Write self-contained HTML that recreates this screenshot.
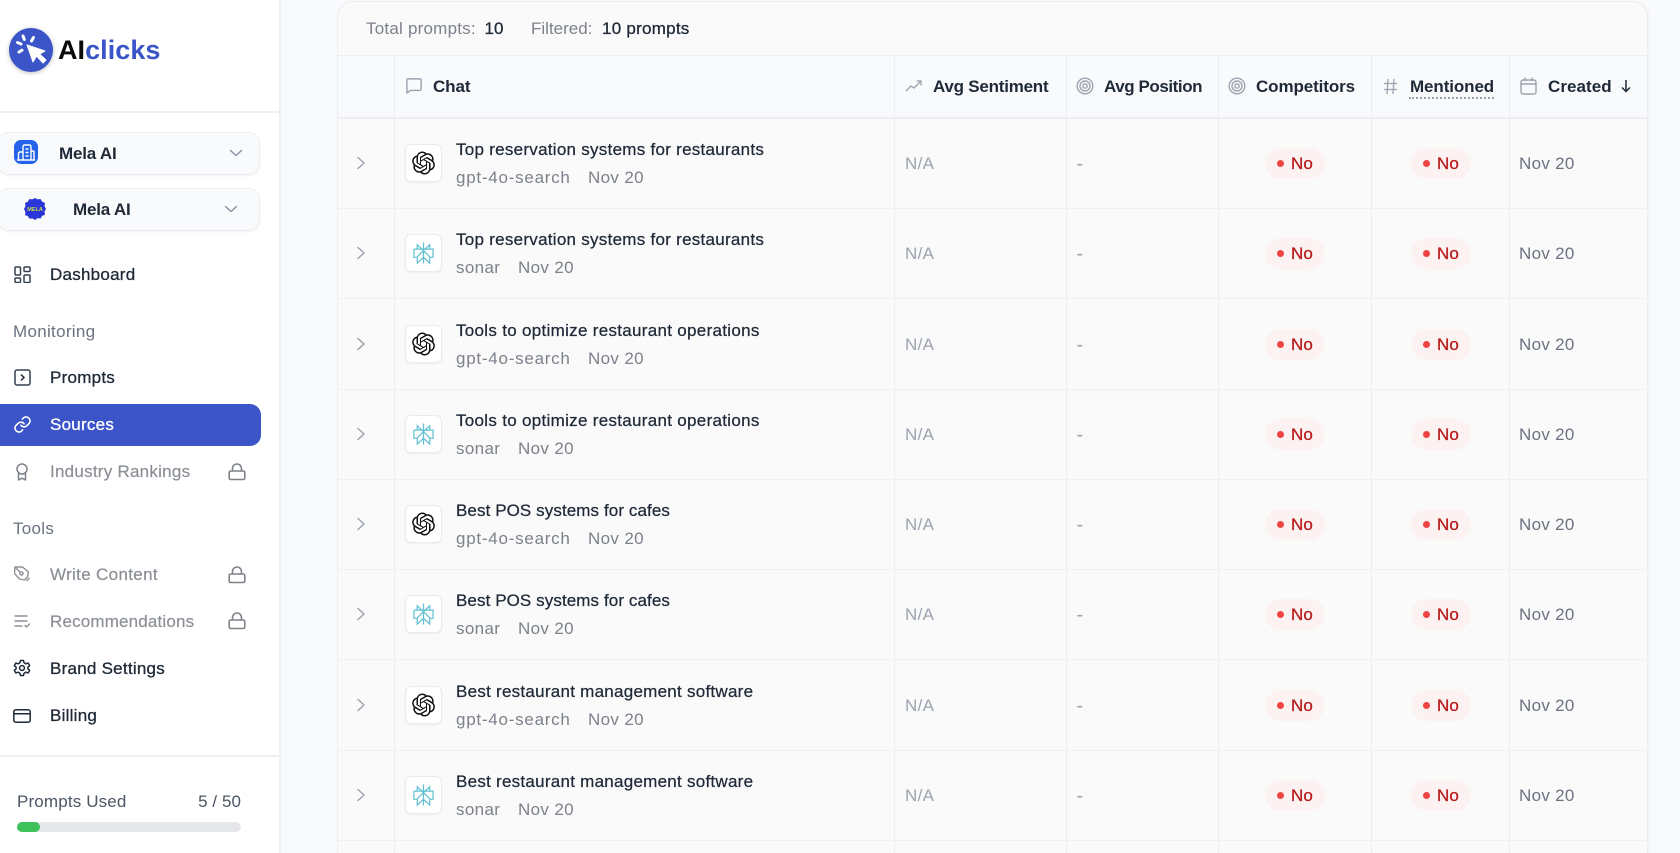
<!DOCTYPE html>
<html><head><meta charset="utf-8"><style>
html,body{margin:0;padding:0;width:1680px;height:853px;overflow:hidden;background:#fff}
body{font-family:"Liberation Sans",sans-serif;position:relative;filter:blur(.35px)}
.a,.t{position:absolute}
.t{white-space:nowrap;line-height:20px;transform:translateY(-9px)}
.n{font-size:17px;letter-spacing:.25px;color:#1f2937;-webkit-text-stroke:.3px #1f2937;left:50px}
.g{color:#8b8f96;-webkit-text-stroke:.2px #8b8f96}
.sec{font-size:17px;letter-spacing:.3px;color:#6b7280;left:13px}
.dd{position:absolute;left:-2px;width:260px;height:41px;background:#f9fafb;border:1px solid #eceef2;border-radius:11px;box-shadow:0 1px 2px rgba(0,0,0,.05)}
.th{font-size:17px;font-weight:700;color:#1f2937;top:86px}
.ln{position:absolute;background:#eceef1}
.row{position:absolute;left:338px;width:1310px;height:90px;border-bottom:1px solid #f0f1f4}
.c{left:17px;top:45px;width:12px;height:14px;transform:translateY(-7px)}
.logo{position:absolute;left:67px;top:26px;width:35px;height:36px;background:#fff;border:1px solid #e9ebef;border-radius:6px;box-shadow:0 1px 2px rgba(0,0,0,.05)}
.logo svg{position:absolute;left:6px;top:6px;width:23px;height:24px}
.ti{left:118px;top:31px;font-size:17px;letter-spacing:.27px;color:#1f2937;-webkit-text-stroke:.25px #1f2937}
.ti2{letter-spacing:.3px}.ti3{letter-spacing:.09px}.ti4{letter-spacing:.26px}
.su{top:59px;font-size:17px;letter-spacing:.35px;color:#7c818a}
.gp{letter-spacing:.75px}
.na{left:567px;top:45px;font-size:17px;letter-spacing:.3px;color:#9ca3af}
.da{left:738.500px;top:45px;font-size:20px;color:#9ca3af}
.cr{left:1181px;top:45px;font-size:17px;letter-spacing:.3px;color:#6b7280}
.p{position:absolute;top:30px;width:60px;height:31px;border-radius:16px;background:#fdf2f2}
.p i{position:absolute;left:12px;top:12px;width:7px;height:7px;border-radius:50%;background:#ef4444}
.p b{position:absolute;left:26px;top:6px;font-size:17px;line-height:20px;font-weight:400;color:#b91c1c;-webkit-text-stroke:.3px #b91c1c;letter-spacing:.1px}
</style></head><body>
<svg width="0" height="0" style="position:absolute"><defs>
<symbol id="oa" viewBox="0 0 24 24"><path fill="#111" d="M22.2819 9.8211a5.9847 5.9847 0 0 0-.5157-4.9108 6.0462 6.0462 0 0 0-6.5098-2.9A6.0651 6.0651 0 0 0 4.9807 4.1818a5.9847 5.9847 0 0 0-3.9977 2.9 6.0462 6.0462 0 0 0 .7427 7.0966 5.98 5.98 0 0 0 .511 4.9107 6.051 6.051 0 0 0 6.5146 2.9001A5.9847 5.9847 0 0 0 13.2599 24a6.0557 6.0557 0 0 0 5.7718-4.2058 5.9894 5.9894 0 0 0 3.9977-2.9001 6.0557 6.0557 0 0 0-.7475-7.0729zm-9.022 12.6081a4.4755 4.4755 0 0 1-2.8764-1.0408l.1419-.0804 4.7783-2.7582a.7948.7948 0 0 0 .3927-.6813v-6.7369l2.02 1.1686a.071.071 0 0 1 .038.052v5.5826a4.504 4.504 0 0 1-4.4945 4.4944zm-9.6607-4.1254a4.4708 4.4708 0 0 1-.5346-3.0137l.142.0852 4.783 2.7582a.7712.7712 0 0 0 .7806 0l5.8428-3.3685v2.3324a.0804.0804 0 0 1-.0332.0615L9.74 19.9502a4.4992 4.4992 0 0 1-6.1408-1.6464zM2.3408 7.8956a4.485 4.485 0 0 1 2.3655-1.9728V11.6a.7664.7664 0 0 0 .3879.6765l5.8144 3.3543-2.0201 1.1685a.0757.0757 0 0 1-.071 0l-4.8303-2.7865A4.504 4.504 0 0 1 2.3408 7.872zm16.5963 3.8558L13.1038 8.364 15.1192 7.2a.0757.0757 0 0 1 .071 0l4.8303 2.7913a4.4944 4.4944 0 0 1-.6765 8.1042v-5.6772a.79.79 0 0 0-.407-.667zm2.0107-3.0231l-.142-.0852-4.7735-2.7818a.7759.7759 0 0 0-.7854 0L9.409 9.2297V6.8974a.0662.0662 0 0 1 .0284-.0615l4.8303-2.7866a4.4992 4.4992 0 0 1 6.6802 4.66zM8.3065 12.863l-2.02-1.1638a.0804.0804 0 0 1-.038-.0567V6.0742a4.4992 4.4992 0 0 1 7.3757-3.4537l-.142.0805L8.704 5.459a.7948.7948 0 0 0-.3927.6813zm1.0976-2.3654l2.602-1.4998 2.6069 1.4998v2.9994l-2.5974 1.4997-2.6067-1.4997Z"/></symbol>
<symbol id="px" viewBox="0 0 24 24"><path fill="none" stroke="#62c0d2" stroke-width="1.300" d="M12 1v22M12 9.500 5.500 3.500V8M12 9.500l6.500-6V8M2 8h20v8.500h-3.500M2 8v8.500h3.500M12 9.500l-6.500 6.500v6.500L12 16.500M12 9.500l6.500 6.500v6.500L12 16.500"/></symbol>
<symbol id="ch" viewBox="0 0 12 14"><path fill="none" stroke="#9ca3af" stroke-width="1.500" stroke-linecap="round" stroke-linejoin="round" d="M3 1.500 9 7l-6 5.500"/></symbol>
<symbol id="lk" viewBox="0 0 18 18"><path fill="none" stroke="#7d8288" stroke-width="1.600" d="M1.200 9.500A1.500 1.500 0 0 1 2.700 8h12.600a1.500 1.500 0 0 1 1.500 1.500v5.500a1.500 1.500 0 0 1-1.500 1.500H2.700a1.500 1.500 0 0 1-1.500-1.500zM4.500 8V5.500a4.500 4.500 0 0 1 9 0V8"/></symbol>
<symbol id="tg" viewBox="0 0 18 18"><g fill="none" stroke="#9ca3af" stroke-width="1.400"><circle cx="9" cy="9" r="7.800"/><circle cx="9" cy="9" r="5"/><circle cx="9" cy="9" r="2.200"/></g></symbol>
<symbol id="dn" viewBox="0 0 14 8"><path fill="none" stroke="#8a94a6" stroke-width="1.500" stroke-linecap="round" stroke-linejoin="round" d="M1.500 1.500 7 6.500l5.500-5"/></symbol>
</defs></svg>

<!-- main background -->
<div class="a" style="left:281px;top:0;width:1399px;height:853px;background:#f9fafc"></div>
<div class="a" style="left:337px;top:1px;width:1311px;height:860px;background:#fafafb;border:1px solid #eceef1;border-radius:16px 16px 0 0;box-sizing:border-box;box-shadow:2px 0 3px rgba(0,0,0,.03)"></div>

<!-- sidebar -->
<div class="a" style="left:0;top:0;width:279px;height:853px;background:#fff;border-right:2px solid #eef0f4"></div>
<div class="ln" style="left:0;top:111px;width:279px;height:2px;background:#eeeff2"></div>
<div class="ln" style="left:0;top:755px;width:279px;height:2px;background:#eeeff2"></div>

<svg class="a" style="left:7px;top:26px;filter:drop-shadow(0 1px 2px rgba(0,0,0,.25))" width="48" height="50" viewBox="0 0 48 50"><circle cx="24" cy="24" r="22" fill="#3b54c8"/><path fill="#fff" stroke="#fff" stroke-width="1" stroke-linejoin="round" d="M20 19 26 36 29.500 30 36 37 39 34 32.500 28 38 25Z"/><path stroke="#fff" stroke-width="3" stroke-linecap="round" fill="none" d="M16 10l1.300 3.500M26.500 11.500l-2 3.500M10.500 16.500l3.500 1.500M12 26l3-1.800"/></svg>
<div class="t" style="left:58px;top:49px;font-size:27px;font-weight:700;letter-spacing:.05px;color:#0a0a0a">AI<span style="color:#3b54c8">clicks</span></div>

<div class="dd" style="top:132px"></div>
<svg class="a" style="left:14px;top:140px" width="24" height="24" viewBox="0 0 24 24"><rect width="24" height="24" rx="7" fill="#2563eb"/><path fill="none" stroke="#fff" stroke-width="1.400" d="M9 20V6.500A1.500 1.500 0 0 1 10.500 5h5A1.500 1.500 0 0 1 17 6.500V20M4.500 20v-6.500A1.500 1.500 0 0 1 6 12h3M17 11h2a1 1 0 0 1 1 1v8M3 20h18M11.500 9h3M11.500 12.500h3M11.500 16h3"/></svg>
<div class="t" style="left:59px;top:153px;font-size:17px;font-weight:700;letter-spacing:-.2px;color:#1f2937">Mela AI</div>
<svg class="a" style="left:229px;top:149px" width="14" height="8"><use href="#dn"/></svg>

<div class="dd" style="top:188px"></div>
<svg class="a" style="left:24px;top:198px" width="22" height="22" viewBox="0 0 22 22"><path fill="#2a36d8" d="M11 0l2.600 1.400L16.500 1l1.500 2.500L21 5l-.5 3L22 11l-1.500 2.600.5 3-3 1.400-1.500 2.500-2.900-.4L11 22l-2.600-1.600-2.900.4L4 18.300 1 17l.5-3L0 11l1.500-3L1 5l3-1.500L5.500 1l2.900.4z"/><text x="11" y="13" text-anchor="middle" font-family="Liberation Sans" font-size="5.500" font-weight="700" fill="#c7dc4a">MELA</text></svg>
<div class="t" style="left:73px;top:209px;font-size:17px;font-weight:700;letter-spacing:-.2px;color:#1f2937">Mela AI</div>
<svg class="a" style="left:224px;top:205px" width="14" height="8"><use href="#dn"/></svg>

<!-- nav icons -->
<svg class="a" style="left:14px;top:266px" width="17" height="17" viewBox="0 0 17 17"><g fill="none" stroke="#374151" stroke-width="1.500"><rect x="1" y="1" width="5.500" height="8" rx="1"/><rect x="10" y="1" width="6" height="4.500" rx="1"/><rect x="1" y="12" width="5.500" height="4.500" rx="1"/><rect x="10" y="9" width="6" height="7.500" rx="1"/></g></svg>
<div class="t n" style="top:274px">Dashboard</div>
<div class="t sec" style="top:331px">Monitoring</div>
<svg class="a" style="left:14px;top:369px" width="17" height="17" viewBox="0 0 17 17"><rect x="1" y="1" width="15" height="15" rx="2" fill="none" stroke="#374151" stroke-width="1.500"/><path d="M7 5.500l3 3-3 3" fill="none" stroke="#1f2937" stroke-width="1.500"/></svg>
<div class="t n" style="top:377px">Prompts</div>

<div class="a" style="left:0;top:404px;width:261px;height:42px;background:#3b54c8;border-radius:0 11px 11px 0"></div>
<svg class="a" style="left:13px;top:415px" width="19" height="19" viewBox="0 0 24 24"><path fill="none" stroke="#fff" stroke-width="2" stroke-linecap="round" stroke-linejoin="round" d="M10 13a5 5 0 0 0 7.500.5l3-3a5 5 0 0 0-7-7l-1.700 1.700M14 11a5 5 0 0 0-7.500-.5l-3 3a5 5 0 0 0 7 7l1.700-1.700"/></svg>
<div class="t n" style="top:424px;color:#fff;-webkit-text-stroke:.3px #fff">Sources</div>

<svg class="a" style="left:15px;top:463px" width="14" height="18" viewBox="0 0 14 18"><g fill="none" stroke="#7d8288" stroke-width="1.500" stroke-linejoin="round"><circle cx="7" cy="6" r="5"/><path d="M3.500 10v7L7 15.200 10.500 17v-7"/></g></svg>
<div class="t n g" style="top:471px;letter-spacing:.25px">Industry Rankings</div>
<svg class="a" style="left:228px;top:463px" width="18" height="18"><use href="#lk"/></svg>
<div class="t sec" style="top:528px">Tools</div>

<svg class="a" style="left:14px;top:566px" width="17" height="17" viewBox="0 0 17 17"><g fill="none" stroke="#8b8f96" stroke-width="1.400" stroke-linejoin="round"><path d="M1 1h7.500l6 5-1 5-3 3-5-1-5-5.500zM1 1l5 5"/><circle cx="7.500" cy="7.500" r="1.600"/><path d="M12.500 15l3-3"/></g></svg>
<div class="t n g" style="top:574px;letter-spacing:.33px">Write Content</div>
<svg class="a" style="left:228px;top:566px" width="18" height="18"><use href="#lk"/></svg>

<svg class="a" style="left:14px;top:614px" width="17" height="15" viewBox="0 0 17 15"><path fill="none" stroke="#8b8f96" stroke-width="1.400" stroke-linecap="round" d="M1 2h12M1 7h12M1 12h7M11 11.500l1.500 1.500 3-3"/></svg>
<div class="t n g" style="top:621px;letter-spacing:.17px">Recommendations</div>
<svg class="a" style="left:228px;top:612px" width="18" height="18"><use href="#lk"/></svg>

<svg class="a" style="left:13px;top:659px" width="18" height="18" viewBox="0 0 24 24"><g fill="none" stroke="#1f2937" stroke-width="2" stroke-linejoin="round"><circle cx="12" cy="12" r="3.200"/><path d="M10 2h4l.7 3 2.500 1.400 3-1 2 3.500-2.300 2v2.200l2.300 2-2 3.500-3-1-2.500 1.400-.7 3h-4l-.7-3-2.500-1.400-3 1-2-3.500 2.300-2v-2.200l-2.300-2 2-3.500 3 1L9.300 5z"/></g></svg>
<div class="t n" style="top:668px;letter-spacing:.25px">Brand Settings</div>
<svg class="a" style="left:13px;top:709px" width="18" height="14" viewBox="0 0 18 14"><g fill="none" stroke="#1f2937" stroke-width="1.500"><rect x=".8" y=".8" width="16.400" height="12.400" rx="2"/><path d="M.8 4.800h16.400"/></g></svg>
<div class="t n" style="top:715px">Billing</div>

<div class="t" style="left:17px;top:801px;font-size:17px;letter-spacing:.15px;color:#4b5563">Prompts Used</div>
<div class="t" style="right:1439px;top:801px;font-size:17px;letter-spacing:.05px;color:#4b5563">5 / 50</div>
<div class="a" style="left:17px;top:822px;width:224px;height:10px;border-radius:5px;background:#e5e7eb"></div>
<div class="a" style="left:17px;top:822px;width:23px;height:10px;border-radius:5px;background:#3fc25b"></div>

<!-- stats -->
<div class="t" style="left:366px;top:28px;font-size:17px;letter-spacing:.22px;color:#7c818a">Total prompts:</div>
<div class="t" style="left:484.500px;top:28px;font-size:17px;letter-spacing:.1px;color:#1f2937;-webkit-text-stroke:.3px #1f2937">10</div>
<div class="t" style="left:531px;top:28px;font-size:17px;letter-spacing:0;color:#7c818a">Filtered:</div>
<div class="t" style="left:602px;top:28px;font-size:17px;letter-spacing:.25px;color:#1f2937;-webkit-text-stroke:.3px #1f2937">10 prompts</div>

<!-- table header -->
<div class="a" style="left:338px;top:55px;width:1309px;height:64px;background:#f9fafc;border-top:1px solid #eceef1;border-bottom:2px solid #eceef1;box-sizing:border-box"></div>
<svg class="a" style="left:406px;top:78px" width="16" height="16" viewBox="0 0 18 18"><path fill="none" stroke="#9ca3af" stroke-width="1.600" stroke-linejoin="round" d="M1 2.500A1.500 1.500 0 0 1 2.500 1h13A1.500 1.500 0 0 1 17 2.500v10a1.500 1.500 0 0 1-1.500 1.500H5l-4 3z"/></svg>
<div class="t th" style="left:433px;letter-spacing:-.1px">Chat</div>
<svg class="a" style="left:905px;top:79px" width="18" height="14" viewBox="0 0 18 14"><path fill="none" stroke="#9ca3af" stroke-width="1.300" d="M1 12l5-5 3 2 7-7M11.500 2H16v4.500"/></svg>
<div class="t th" style="left:933px;letter-spacing:-.23px">Avg Sentiment</div>
<svg class="a" style="left:1076px;top:77px" width="18" height="18"><use href="#tg"/></svg>
<div class="t th" style="left:1104px;letter-spacing:-.43px">Avg Position</div>
<svg class="a" style="left:1228px;top:77px" width="18" height="18"><use href="#tg"/></svg>
<div class="t th" style="left:1256px;letter-spacing:-.1px">Competitors</div>
<svg class="a" style="left:1383px;top:78px" width="15" height="17" viewBox="0 0 15 17"><path fill="none" stroke="#9ca3af" stroke-width="1.300" d="M5 1 4 16M11 1l-1 15M1 5.500h13M1 11.500h13"/></svg>
<div class="t th" style="left:1410px;letter-spacing:-.1px">Mentioned</div>
<div class="a" style="left:1409px;top:97px;width:85px;border-top:2px dotted #9ca3af"></div>
<svg class="a" style="left:1520px;top:77px" width="17" height="18" viewBox="0 0 17 18"><g fill="none" stroke="#9ca3af" stroke-width="1.400"><rect x="1" y="3" width="15" height="14" rx="2"/><path d="M1 7h15M5 .500V4M12 .500V4"/></g></svg>
<div class="t th" style="left:1548px;letter-spacing:.05px">Created</div>
<svg class="a" style="left:1620px;top:79px" width="12" height="14" viewBox="0 0 12 14"><path fill="none" stroke="#1f2937" stroke-width="1.500" d="M6 1v11M2 8.500 6 12.500l4-4"/></svg>

<!-- rows -->
<div class="row" style="top:118px"><svg class="a c" width="12" height="14"><use href="#ch"/></svg><div class="logo"><svg><use href="#oa"/></svg></div><div class="t ti">Top reservation systems for restaurants</div><div class="t su gp" style="left:118px">gpt-4o-search</div><div class="t su" style="left:250px">Nov 20</div><div class="t na">N/A</div><div class="t da">-</div><div class="p" style="left:927px"><i></i><b>No</b></div><div class="p" style="left:1073px"><i></i><b>No</b></div><div class="t cr">Nov 20</div></div>
<div class="row" style="top:208.250px"><svg class="a c" width="12" height="14"><use href="#ch"/></svg><div class="logo"><svg><use href="#px"/></svg></div><div class="t ti">Top reservation systems for restaurants</div><div class="t su" style="left:118px">sonar</div><div class="t su" style="left:180px">Nov 20</div><div class="t na">N/A</div><div class="t da">-</div><div class="p" style="left:927px"><i></i><b>No</b></div><div class="p" style="left:1073px"><i></i><b>No</b></div><div class="t cr">Nov 20</div></div>
<div class="row" style="top:298.500px"><svg class="a c" width="12" height="14"><use href="#ch"/></svg><div class="logo"><svg><use href="#oa"/></svg></div><div class="t ti ti2">Tools to optimize restaurant operations</div><div class="t su gp" style="left:118px">gpt-4o-search</div><div class="t su" style="left:250px">Nov 20</div><div class="t na">N/A</div><div class="t da">-</div><div class="p" style="left:927px"><i></i><b>No</b></div><div class="p" style="left:1073px"><i></i><b>No</b></div><div class="t cr">Nov 20</div></div>
<div class="row" style="top:388.750px"><svg class="a c" width="12" height="14"><use href="#ch"/></svg><div class="logo"><svg><use href="#px"/></svg></div><div class="t ti ti2">Tools to optimize restaurant operations</div><div class="t su" style="left:118px">sonar</div><div class="t su" style="left:180px">Nov 20</div><div class="t na">N/A</div><div class="t da">-</div><div class="p" style="left:927px"><i></i><b>No</b></div><div class="p" style="left:1073px"><i></i><b>No</b></div><div class="t cr">Nov 20</div></div>
<div class="row" style="top:479px"><svg class="a c" width="12" height="14"><use href="#ch"/></svg><div class="logo"><svg><use href="#oa"/></svg></div><div class="t ti ti3">Best POS systems for cafes</div><div class="t su gp" style="left:118px">gpt-4o-search</div><div class="t su" style="left:250px">Nov 20</div><div class="t na">N/A</div><div class="t da">-</div><div class="p" style="left:927px"><i></i><b>No</b></div><div class="p" style="left:1073px"><i></i><b>No</b></div><div class="t cr">Nov 20</div></div>
<div class="row" style="top:569.250px"><svg class="a c" width="12" height="14"><use href="#ch"/></svg><div class="logo"><svg><use href="#px"/></svg></div><div class="t ti ti3">Best POS systems for cafes</div><div class="t su" style="left:118px">sonar</div><div class="t su" style="left:180px">Nov 20</div><div class="t na">N/A</div><div class="t da">-</div><div class="p" style="left:927px"><i></i><b>No</b></div><div class="p" style="left:1073px"><i></i><b>No</b></div><div class="t cr">Nov 20</div></div>
<div class="row" style="top:659.500px"><svg class="a c" width="12" height="14"><use href="#ch"/></svg><div class="logo"><svg><use href="#oa"/></svg></div><div class="t ti ti4">Best restaurant management software</div><div class="t su gp" style="left:118px">gpt-4o-search</div><div class="t su" style="left:250px">Nov 20</div><div class="t na">N/A</div><div class="t da">-</div><div class="p" style="left:927px"><i></i><b>No</b></div><div class="p" style="left:1073px"><i></i><b>No</b></div><div class="t cr">Nov 20</div></div>
<div class="row" style="top:749.750px"><svg class="a c" width="12" height="14"><use href="#ch"/></svg><div class="logo"><svg><use href="#px"/></svg></div><div class="t ti ti4">Best restaurant management software</div><div class="t su" style="left:118px">sonar</div><div class="t su" style="left:180px">Nov 20</div><div class="t na">N/A</div><div class="t da">-</div><div class="p" style="left:927px"><i></i><b>No</b></div><div class="p" style="left:1073px"><i></i><b>No</b></div><div class="t cr">Nov 20</div></div>

<!-- column lines -->
<div class="ln" style="left:394px;top:56px;width:1px;height:797px"></div>
<div class="ln" style="left:894px;top:56px;width:1px;height:797px"></div>
<div class="ln" style="left:1066px;top:56px;width:1px;height:797px"></div>
<div class="ln" style="left:1218px;top:56px;width:1px;height:797px"></div>
<div class="ln" style="left:1371px;top:56px;width:1px;height:797px"></div>
<div class="ln" style="left:1509px;top:56px;width:1px;height:797px"></div>
</body></html>
